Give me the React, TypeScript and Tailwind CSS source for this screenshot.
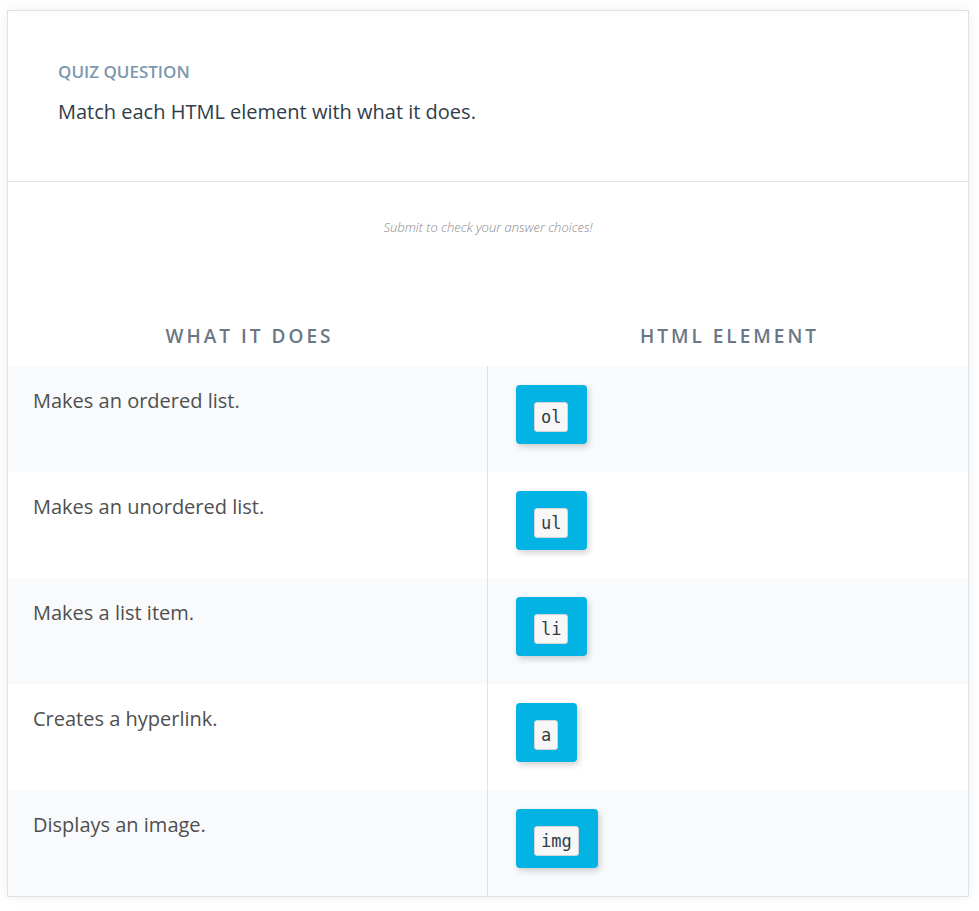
const rows = [
  { text: "Makes an ordered list.", tag: "ol" },
  { text: "Makes an unordered list.", tag: "ul" },
  { text: "Makes a list item.", tag: "li" },
  { text: "Creates a hyperlink.", tag: "a" },
  { text: "Displays an image.", tag: "img" },
];

const Chip = ({ tag }: { tag: string }) => (
  <div className="inline-flex bg-[#02b3e4] rounded-[4px] pl-[18px] pr-[19px] pt-[17px] pb-[12px] shadow-[2px_3px_6px_rgba(0,0,0,0.18)]">
    <code className="block bg-[#f7f7f7] border border-[#d4d4d4] rounded-[3px] px-[6px] h-[30px] leading-[28px] text-[17px] text-[#2e3d49] font-['DejaVu_Sans_Mono',monospace]">
      {tag}
    </code>
  </div>
);

export default function App() {
  return (
    <div className="min-h-[911px] bg-white pt-[10px] pl-[7px] font-['Open_Sans',sans-serif]">
      <div className="w-[962px] border border-[#dbe2e8] bg-white shadow-[0_0_12px_rgba(0,0,0,0.07)]">
        <div className="h-[171px] border-b border-[#dbe2e8] pl-[50px] pt-[49px]">
          <div className="text-[17px] font-semibold text-[#7d97ad] leading-[24px]">QUIZ QUESTION</div>
          <div className="mt-[13px] text-[20px] text-[#2e3d49] leading-[30px]">
            Match each HTML element with what it does.
          </div>
        </div>

        <div className="pt-[36px] text-center text-[13px] italic font-light text-[#8a8a8a] leading-[18px]">
          Submit to check your answer choices!
        </div>

        <div className="mt-[85px] mb-[15px] h-[30px] flex text-[19px] font-semibold tracking-[3px] text-[#6b7785] leading-[30px]">
          <div className="w-1/2 text-center pl-[3px]">WHAT IT DOES</div>
          <div className="w-1/2 text-center pl-[3px]">HTML ELEMENT</div>
        </div>

        <div>
          {rows.map((r, i) => (
            <div key={r.tag} className={`flex h-[106px] ${i % 2 === 0 ? "bg-[#f9fafc]" : "bg-white"}`}>
              <div className="w-1/2 border-r border-[#dbe2e8] pl-[25px] pt-[20px] text-[20px] text-[#4f4f4f] leading-[30px]">
                {r.text}
              </div>
              <div className="w-1/2 pl-[28px] pt-[19px]">
                <Chip tag={r.tag} />
              </div>
            </div>
          ))}
        </div>
      </div>
    </div>
  );
}
